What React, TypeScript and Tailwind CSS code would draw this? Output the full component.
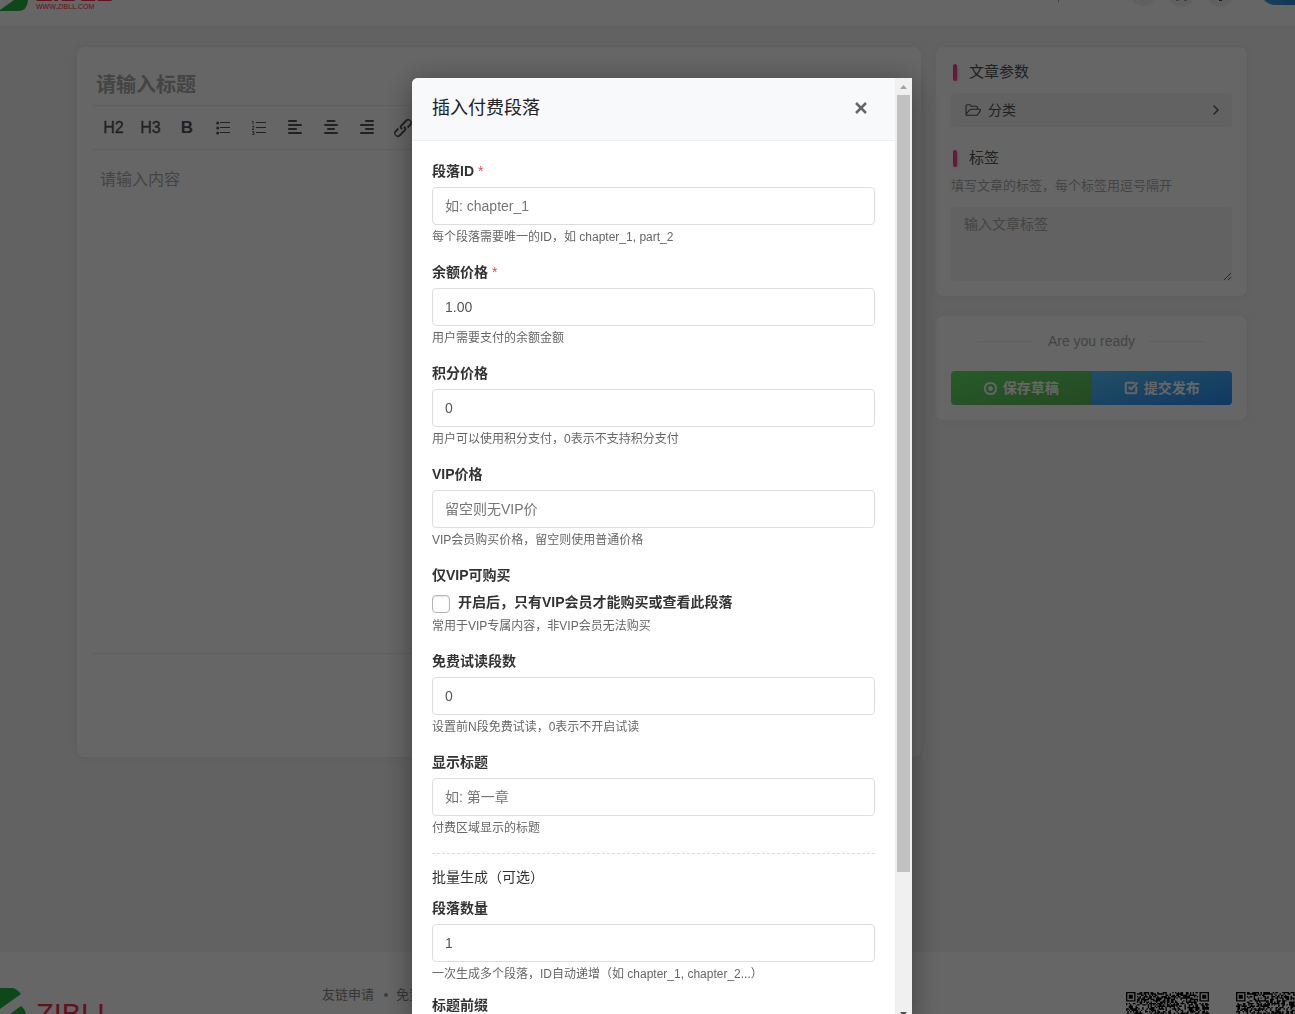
import React from "react";
import { ChevronRight, SquareCheckBig, X } from "lucide-react";
import { FaRegDotCircle } from "react-icons/fa";

const QR_SIZE = 61;

function inFinder(x: number, y: number): boolean | null {
  const corners = [
    [0, 0],
    [QR_SIZE - 7, 0],
    [0, QR_SIZE - 7],
  ];
  for (const [cx, cy] of corners) {
    const dx = x - cx;
    const dy = y - cy;
    if (dx >= -1 && dx <= 7 && dy >= -1 && dy <= 7) {
      const ring = Math.max(Math.abs(dx - 3), Math.abs(dy - 3));
      return ring === 3 || ring <= 1;
    }
  }
  return null;
}

function qrPath(seed: number): string {
  let state = seed;
  let d = "";
  for (let y = 0; y < QR_SIZE; y++) {
    for (let x = 0; x < QR_SIZE; x++) {
      state = (state * 1103515245 + 12345) % 2147483648;
      const finder = inFinder(x, y);
      const dark = finder === null ? state / 2147483648 > 0.46 : finder;
      if (dark) d += `M${x} ${y}h1v1h-1z`;
    }
  }
  return d;
}

function QrCode({ seed }: { seed: number }) {
  return (
    <svg viewBox="0 0 61 61" className="size-[83px] shrink-0 fill-black" aria-hidden="true">
      <path d={qrPath(seed)} />
    </svg>
  );
}

function ListIcon({ numbered = false }: { numbered?: boolean }) {
  return (
    <svg viewBox="0 0 16 16" className="size-4" fill="currentColor" aria-hidden="true">
      {numbered ? (
        <path
          d="M1 1.500l1-.5v3.500M1 6.500h2v1.200L1 9.500h2M1 11.500h2v3H1M1.500 13H3"
          fill="none"
          stroke="currentColor"
          strokeWidth="0.8"
        />
      ) : (
        <>
          <circle cx="2.7" cy="3" r="1.500" />
          <circle cx="2.7" cy="8" r="1.500" />
          <circle cx="2.7" cy="13" r="1.500" />
        </>
      )}
      <path d="M5 2h10v1H5zM5 7h10v1H5zM5 12h10v1H5z" />
    </svg>
  );
}

function AlignIcon({ d }: { d: string }) {
  return (
    <svg viewBox="0 0 14 14" className="-mt-px size-[14px]" stroke="currentColor" strokeWidth="2" strokeLinecap="round" aria-hidden="true">
      <path d={d} />
    </svg>
  );
}

function LinkIcon() {
  return (
    <svg viewBox="0 0 24 24" className="size-6 shrink-0" fill="currentColor" aria-hidden="true">
      <path d="M6.2 12.3a1 1 0 0 1 1.4 1.4l-2 2a2 2 0 1 0 2.6 2.8l4.8-4.8a1 1 0 0 0 0-1.4 1 1 0 1 1 1.4-1.3 2.9 2.9 0 0 1 0 4L9.6 20a3.9 3.9 0 0 1-5.5-5.5l2-2zm11.6-.6a1 1 0 0 1-1.4-1.4l2-2a2 2 0 1 0-2.6-2.8L11 10.3a1 1 0 0 0 0 1.4A1 1 0 1 1 9.6 13a2.9 2.9 0 0 1 0-4L14.4 4a3.9 3.9 0 0 1 5.5 5.5l-2 2z" />
    </svg>
  );
}

function FolderIcon() {
  return (
    <svg viewBox="0 0 16 14" className="h-[14px] w-4" fill="none" stroke="currentColor" strokeWidth="1.1" strokeLinejoin="round" aria-hidden="true">
      <path d="M1 11V3.2Q1 1.7 2.5 1.7h2.3Q6 1.7 6 3.2h5q1.5 0 1.5 1.5v1.6M2.2 12.3h9q.9 0 1.5-.7l2.5-3.7q.8-1.5-.7-1.6H6q-1 0-1.6.8L1.2 11q-.5 1.2 1 1.3z" />
    </svg>
  );
}

function ToolButton({ label, children }: { label: string; children: React.ReactNode }) {
  return (
    <button type="button" aria-label={label} className="flex h-9 w-9 shrink-0 items-center justify-center">
      {children}
    </button>
  );
}

function Header() {
  return (
    <header className="flex h-[26px] shrink-0 items-start justify-between overflow-hidden bg-white shadow-[0_0_10px_rgba(0,0,0,0.05)]">
      <a href="#home" aria-label="ZIBLL" className="flex gap-2">
        <svg viewBox="0 0 28 12" className="h-3 w-7 fill-[#22b443]" aria-hidden="true">
          <path d="M14 0h14v1q-1 10-10 10H0v-1z" />
        </svg>
        <span className="flex flex-col text-[#f0304f]">
          <span className="-mt-[25px] h-[28px] text-[27px] leading-[34px] font-bold">ZIBLL</span>
          <span className="text-[7px] leading-[8px]">WWW.ZIBLL.COM</span>
        </span>
      </a>
      <div className="flex items-start">
        <span className="mr-[71px] h-[2px] w-px bg-gray-400" />
        <div className="-mt-5 flex gap-3">
          <button type="button" aria-label="搜索" className="size-[26px] rounded-full bg-[#f0f0f0]" />
          <button type="button" aria-label="菜单" className="flex size-[27px] items-end justify-center gap-[5px] rounded-full bg-[#f0f0f0] pb-[6px]">
            <span className="h-[2px] w-[3px] bg-gray-400" />
            <span className="h-[2px] w-[3px] bg-gray-400" />
          </button>
          <button type="button" aria-label="主题" className="flex size-[27px] items-end justify-center rounded-full bg-[#f0f0f0] pb-[6px]">
            <span className="h-[2px] w-[3px] bg-gray-700" />
          </button>
        </div>
        <button type="button" aria-label="发布" className="-mt-[23px] ml-[27px] h-7 w-[34px] rounded-l-full bg-linear-to-r from-[#36a3e0] to-[#3487dc]" />
      </div>
    </header>
  );
}

function Editor() {
  return (
    <section className="flex h-[710px] min-w-0 flex-1 flex-col rounded-lg bg-white px-[15px] shadow-[0_0_10px_rgba(0,0,0,0.05)]">
      <div className="flex h-[59px] items-end border-b border-[#eee] pb-1 pl-1">
        <input
          aria-label="标题"
          placeholder="请输入标题"
          className="w-full text-[20px] leading-8 font-bold outline-none placeholder:text-[#aaa]"
        />
      </div>
      <div className="flex h-11 items-center border-b border-[#eee] pl-[3px] text-[#4e5358]">
        <button type="button" className="w-[37px] text-[16px] font-medium [-webkit-text-stroke:0.3px_currentColor]">H2</button>
        <button type="button" className="w-[37px] text-[16px] font-medium [-webkit-text-stroke:0.3px_currentColor]">H3</button>
        <button type="button" aria-label="粗体" className="w-9 text-[17px] font-bold">B</button>
        <ToolButton label="项目列表"><ListIcon /></ToolButton>
        <ToolButton label="编号列表"><ListIcon numbered /></ToolButton>
        <ToolButton label="左对齐"><AlignIcon d="M1 1h7M1 5h12M1 9h7M1 13h12" /></ToolButton>
        <ToolButton label="居中"><AlignIcon d="M3.5 1h7M1 5h12M4 9h6M1 13h12" /></ToolButton>
        <ToolButton label="右对齐"><AlignIcon d="M6 1h7M1 5h12M6 9h7M1 13h12" /></ToolButton>
        <ToolButton label="链接"><LinkIcon /></ToolButton>
      </div>
      <textarea
        aria-label="内容"
        placeholder="请输入内容"
        className="h-[503px] resize-none px-2 pt-[18px] text-[16px] leading-6 outline-none placeholder:text-[#aaa]"
      />
      <div className="border-t border-[#eee]" />
    </section>
  );
}

function SideTitle({ children }: { children: React.ReactNode }) {
  return (
    <h2 className="flex items-center gap-3 pl-0.5 text-[15px] leading-5 text-[#4e5358]">
      <span className="h-[17px] w-1 rounded-sm bg-[#f04494] shadow-[1px_1px_3px_-1px_#f04494]" />
      {children}
    </h2>
  );
}

function Sidebar() {
  return (
    <aside className="flex w-[311px] shrink-0 flex-col gap-5">
      <section className="flex flex-col rounded-lg bg-white p-[15px] shadow-[0_0_10px_rgba(0,0,0,0.05)]">
        <SideTitle>文章参数</SideTitle>
        <button type="button" className="mt-[11px] mb-[21px] flex h-[34px] items-center rounded bg-[#f5f5f5] px-[14px] text-[14px] text-[#4e5358]">
          <FolderIcon />
          <span className="ml-[7px]">分类</span>
          <ChevronRight className="-mr-1.5 ml-auto size-4" />
        </button>
        <SideTitle>标签</SideTitle>
        <label htmlFor="tags" className="mt-2 text-[13px] leading-5 text-[#aaa]">填写文章的标签，每个标签用逗号隔开</label>
        <textarea
          id="tags"
          placeholder="输入文章标签"
          className="mt-[11px] h-[74px] w-full rounded bg-[#f5f5f5] px-[13px] py-[7px] text-[14px] leading-5 outline-none placeholder:text-[#aaa]"
        />
      </section>
      <section className="rounded-lg bg-white p-[15px] shadow-[0_0_10px_rgba(0,0,0,0.05)]">
        <div className="flex items-center justify-center gap-[14px] text-[14px] leading-5 text-[#aaa]">
          <span className="h-px w-14 bg-[#eee]" />
          Are you ready
          <span className="h-px w-14 bg-[#eee]" />
        </div>
        <div className="mt-5 flex h-[34px] overflow-hidden rounded text-[14px] font-bold text-white">
          <button type="button" className="flex flex-1 items-center justify-center gap-1.5 bg-linear-to-br from-[#60e464] to-[#5cb85b]">
            <FaRegDotCircle className="size-[13px]" strokeWidth="30" stroke="currentColor" />
            保存草稿
          </button>
          <button type="button" className="flex flex-1 items-center justify-center gap-1.5 bg-linear-to-br from-[#59c3fb] to-[#268df7]">
            <SquareCheckBig className="size-[14px]" strokeWidth={3.5} />
            提交发布
          </button>
        </div>
      </section>
    </aside>
  );
}

function Footer() {
  return (
    <footer className="mt-auto flex h-[62px] shrink-0 overflow-hidden bg-white">
      <a href="#home" aria-label="ZIBLL" className="flex w-[114px] gap-2 pt-9">
        <svg viewBox="0 0 28 26" className="h-[26px] w-7 shrink-0 fill-[#22b443]" aria-hidden="true">
          <path d="M0 0h13q4 1 8 6L0 21zM10 26l11-8q4 3 5 8z" />
        </svg>
        <span className="mt-2 text-[29px] leading-9 text-[#f0304f]">ZIBLL</span>
      </a>
      <nav className="mt-[33px] ml-[208px] flex h-5 items-center gap-2 text-[13px] leading-5 text-[#888]">
        <a href="#links">友链申请</a>
        <span className="ml-0.5 size-1 rounded-full bg-[#999]" />
        <a href="#disclaimer">免责声明</a>
      </nav>
      <div className="-mr-6 ml-auto flex gap-[27px] pt-10">
        <QrCode seed={71} />
        <QrCode seed={907} />
      </div>
    </footer>
  );
}

interface FieldProps {
  id: string;
  label: string;
  hint?: string;
  placeholder?: string;
  value?: string;
  required?: boolean;
}

function Field({ id, label, hint, placeholder, value, required }: FieldProps) {
  return (
    <div className="flex flex-col">
      <label htmlFor={id} className="mb-1.5 text-[14px] leading-5 font-bold text-[#333]">
        {label}
        {required && <span className="font-normal text-[#e5484d]"> *</span>}
      </label>
      <input
        id={id}
        placeholder={placeholder}
        defaultValue={value}
        className="h-[38px] w-full rounded border border-[#ddd] bg-white px-3 text-[14px] text-[#555] outline-none placeholder:text-[#757575]"
      />
      {hint && <p className="mt-1 text-[12px] leading-[17px] text-[#666]">{hint}</p>}
    </div>
  );
}

function Scrollbar() {
  return (
    <div className="flex w-[17px] shrink-0 flex-col items-center bg-[#f0f0f0]" aria-hidden="true">
      <svg viewBox="0 0 17 17" className="size-[17px] shrink-0 fill-[#a3a3a3]">
        <path d="M5 11h7L8.500 7z" />
      </svg>
      <div className="h-[777px] w-[13px] bg-[#c1c1c1]" />
      <svg viewBox="0 0 17 17" className="mt-auto size-[17px] shrink-0 fill-[#505050]">
        <path d="M5 7h7l-3.500 4z" />
      </svg>
    </div>
  );
}

function PaidSectionDialog() {
  return (
    <div className="fixed inset-0 flex justify-center overflow-hidden bg-black/60 pt-[78px] pl-[29px]">
      <div
        role="dialog"
        aria-modal="true"
        aria-labelledby="dialog-title"
        className="flex h-[calc(100vh-70px)] w-[500px] shrink-0 overflow-hidden rounded-tl-md bg-white shadow-[0_5px_30px_rgba(0,0,0,0.4)]"
      >
        <div className="min-w-0 flex-1 overflow-hidden">
          <header className="flex h-[63px] items-center justify-between border-b border-[#eee] bg-[#f8f9fb] pr-6 pb-0.5 pl-5">
            <h1 id="dialog-title" className="text-[18px] leading-6 text-[#222]">插入付费段落</h1>
            <button type="button" aria-label="关闭" className="text-[#666]">
              <X className="size-5" strokeWidth={3} strokeLinecap="butt" />
            </button>
          </header>
          <form className="flex flex-col gap-4 p-5">
            <Field id="chapter-id" label="段落ID" required placeholder="如: chapter_1" hint="每个段落需要唯一的ID，如 chapter_1, part_2" />
            <Field id="price" label="余额价格" required value="1.00" hint="用户需要支付的余额金额" />
            <Field id="points" label="积分价格" value="0" hint="用户可以使用积分支付，0表示不支持积分支付" />
            <Field id="vip-price" label="VIP价格" placeholder="留空则无VIP价" hint="VIP会员购买价格，留空则使用普通价格" />
            <div className="text-[#333]">
              <p className="mb-1.5 text-[14px] leading-5 font-bold">仅VIP可购买</p>
              <label className="flex h-[23px] gap-2 text-[14px] leading-[23px] font-bold">
                <input
                  type="checkbox"
                  className="mt-1 size-[18px] appearance-none rounded border border-[#b4b4b4] bg-white shadow-[inset_0_1px_2px_rgba(0,0,0,0.1)]"
                />
                开启后，只有VIP会员才能购买或查看此段落
              </label>
              <p className="mt-1 text-[12px] leading-[17px] text-[#666]">常用于VIP专属内容，非VIP会员无法购买</p>
            </div>
            <Field id="free" label="免费试读段数" value="0" hint="设置前N段免费试读，0表示不开启试读" />
            <Field id="title" label="显示标题" placeholder="如: 第一章" hint="付费区域显示的标题" />
            <fieldset className="flex flex-col gap-3 border-t border-dashed border-[#ddd] pt-3">
              <p className="-mb-0.5 text-[14px] leading-[22px] text-[#333]">批量生成（可选）</p>
              <Field id="count" label="段落数量" value="1" hint="一次生成多个段落，ID自动递增（如 chapter_1, chapter_2...）" />
              <Field id="prefix" label="标题前缀" />
            </fieldset>
          </form>
        </div>
        <Scrollbar />
      </div>
    </div>
  );
}

export default function App() {
  return (
    <div className="flex h-screen flex-col overflow-hidden bg-[#f4f4f4] font-['Liberation_Sans','Noto_Sans_CJK_SC',sans-serif]">
      <Header />
      <main className="flex items-start gap-[15px] pt-[21px] pr-12 pl-[77px]">
        <Editor />
        <Sidebar />
      </main>
      <Footer />
      <PaidSectionDialog />
    </div>
  );
}
